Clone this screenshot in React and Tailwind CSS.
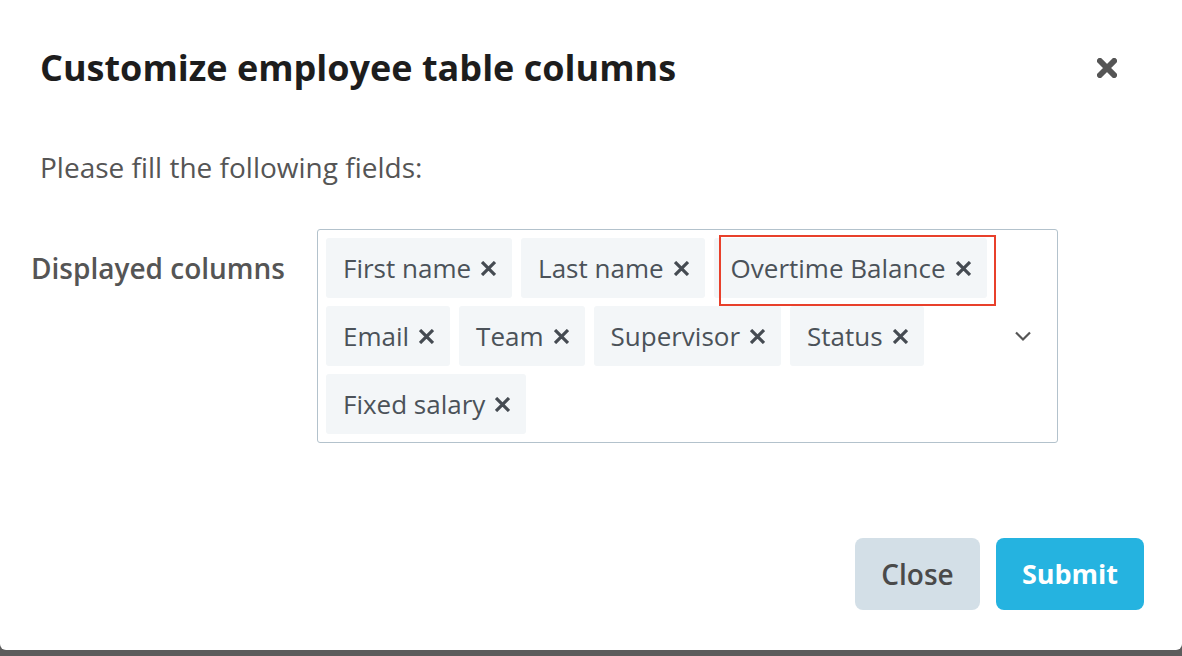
import { useState } from 'react'

const initialColumns = [
  'First name', 'Last name', 'Overtime Balance',
  'Email', 'Team', 'Supervisor', 'Status',
  'Fixed salary',
]

function Cross({ size = 14, stroke = 3.2, className = '' }) {
  return (
    <svg width={size} height={size} viewBox="0 0 14 14" className={className} fill="none">
      <path d="M2 2L12 12M12 2L2 12" stroke="currentColor" strokeWidth={stroke} strokeLinecap="square" />
    </svg>
  )
}

function Tag({ label, marked, onRemove }) {
  return (
    <div className="relative flex items-center h-[60px] pl-[17px] pr-[16px] bg-[#f3f6f8] rounded-[3px] text-[26px] text-[#4b5259]">
      <span>{label}</span>
      <button className="ml-[10px] text-[#454b52]" onClick={onRemove}>
        <Cross size={15} stroke={3} />
      </button>
      {marked && (
        <div className="absolute left-[5px] top-[-3px] right-[-9px] bottom-[-8px] border-2 border-[#e8402b] pointer-events-none" />
      )}
    </div>
  )
}

export default function App() {
  const [columns, setColumns] = useState(initialColumns)

  return (
    <div className="h-screen bg-[#5c5c5c] font-['Open_Sans',sans-serif]">
      <div className="h-[650px] bg-white rounded-b-[6px] flex flex-col">
        {/* Header */}
        <div className="flex items-center justify-between pt-[44px] pl-[40px] pr-[65px]">
          <h1 className="text-[36px] leading-[48px] font-bold text-[#1d1d1d]">Customize employee table columns</h1>
          <button className="text-[#555]">
            <Cross size={20} stroke={4} />
          </button>
        </div>

        <p className="mt-[56px] ml-[40px] text-[28px] leading-[38px] text-[#555]">Please fill the following fields:</p>

        {/* Form row */}
        <div className="flex mt-[43px]">
          <label className="w-[317px] pl-[31px] pt-[20px] text-[28px] leading-[38px] font-semibold text-[#555]">Displayed columns</label>
          <div className="w-[741px] h-[214px] border border-[#b3c2cc] rounded-[3px] flex items-center pl-[8px] pr-[25px] py-[8px]">
            <div className="flex flex-wrap gap-x-[9px] gap-y-[8px] w-[680px] content-start self-start">
              {columns.map(c => (
                <Tag key={c} label={c} marked={c === 'Overtime Balance'}
                  onRemove={() => setColumns(columns.filter(x => x !== c))} />
              ))}
            </div>
            <svg width="18" height="12" viewBox="0 0 18 12" fill="none" className="ml-auto text-[#555]">
              <path d="M2 2.5L9 9.5L16 2.5" stroke="currentColor" strokeWidth="2.2" />
            </svg>
          </div>
        </div>

        {/* Footer */}
        <div className="flex justify-end gap-[16px] mt-auto mb-[40px] pr-[38px]">
          <button className="w-[125px] h-[72px] rounded-[8px] bg-[#d3dfe7] text-[28px] font-semibold text-[#4a4a4a]">Close</button>
          <button className="w-[148px] h-[72px] rounded-[8px] bg-[#25b3e0] text-[27px] font-bold text-white">Submit</button>
        </div>
      </div>
    </div>
  )
}
